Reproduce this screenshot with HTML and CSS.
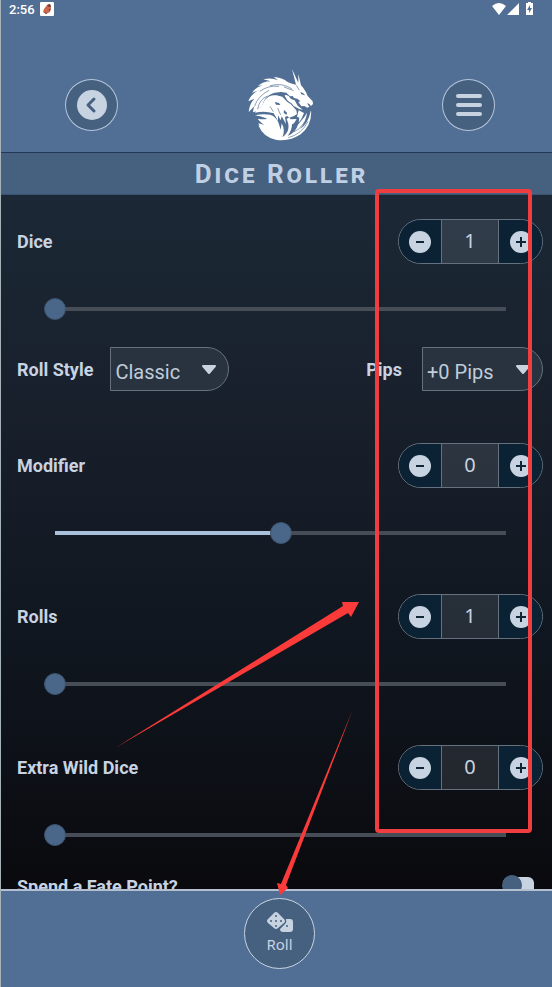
FILE: index.html
```html
<!DOCTYPE html>
<html lang="en">
<head>
    <meta charset="UTF-8">
    <meta name="viewport" content="width=device-width, initial-scale=1.0">
    <title>Dice Roller</title>
    <link rel="stylesheet" href="styles.css">
</head>
<body>
    <div class="app">
        <header class="header">
            <div class="status-bar">
                <span>2:56</span>
                <svg class="status-app" viewBox="0 0 14 14" aria-hidden="true">
                    <rect width="14" height="14" rx="1" fill="#fff"/>
                    <path d="M7 3 L10 2 L11 6 L10 10 L6 12 L3 10 L4 7 Z" fill="#c9674c"/>
                    <path d="M7 3 L10 2 L11 5 L9 5 Z M4 10 L7 11 L6 12 Z M9 7 L11 7 L9 9 Z" fill="#6d3a35"/>
                </svg>
                <svg class="status-icons" viewBox="0 0 42 14" aria-hidden="true">
                    <path d="M0 4 Q7 -2 14 4 L7 13 Z M15 13 L27 1 L27 13 Z" fill="#fff"/>
                    <path d="M36 0 h3 v1 h2 v12 h-7 v-12 h2 Z" fill="#fff"/>
                    <path d="M38 3 L35 8 h2 v3 L40 6 h-2 Z" fill="#516f94"/>
                </svg>
            </div>
            <nav class="nav">
                <button class="round-btn" aria-label="Back">
                    <svg width="30" height="30" viewBox="0 0 30 30">
                        <circle cx="15" cy="15" r="15" fill="#c8d3e2"/>
                        <path d="M17 9 L11 15 L17 21" fill="none" stroke="#46607f" stroke-width="3" stroke-linecap="round" stroke-linejoin="round"/>
                    </svg>
                </button>
                <svg class="logo" viewBox="33 27 198 216" role="img" aria-label="Dragon">
                    <!-- mane, horns and dragon head -->
                    <path fill="#fff" d="M51 157 Q52 145 56 138 L38 156 Q40 132 55 116 L37 124 Q44 103 65 92 L48 98 Q58 82 80 76 L66 78 Q80 64 104 64 L82 58 Q106 52 126 61 L113 51 Q138 52 156 67 L171 72 L180 74 L168 27 L184 62 L187 68 L187 42 L195 76 L202 84 L210 97 L215 108 L230 124 L231 132 L225 138 L219 131 L213 130 L220 140 L214 143 L205 138 L196 139 L187 126 L193 124 L184 116 L174 114 L170 108 L162 109 L151 98 L135 96 L116 98 Q94 104 84 122 L78 139 Q68 143 64 153 Z"/>
                    <!-- inner lion head -->
                    <path fill="#fff" d="M57 158 L64 148 L77 139 L86 121 Q99 103 122 106 L139 110 L154 126 L164 132 L181 151 L183 162 L174 168 L160 173 L154 168 L147 171 L150 192 L137 169 L134 181 L126 166 L126 182 L113 160 Q87 151 57 158 Z"/>
                    <path fill="#fff" d="M142 101 L158 108 L165 117 L176 121 L185 137 L200 149 L190 147 L173 138 L168 131 L155 122 Z"/>
                    <!-- tail coils -->
                    <path fill="#fff" d="M57 166 Q79 160 102 164 Q119 169 127 187 L134 209 L137 190 Q149 210 139 232 Q168 211 152 177 L160 172 Q178 195 155 228 Q179 217 186 194 L205 171 L213 158 Q211 184 192 207 Q216 193 225 151 Q229 194 194 223 Q159 246 119 239 Q82 232 67 196 Q87 207 96 202 Q74 189 65 176 Q83 180 94 176 Q75 169 57 166 Z"/>
                    <path fill="#fff" d="M160 178 L182 177 L174 190 L166 194 Z M188 151 L204 159 L196 177 L188 188 L190 173 L183 170 Z"/>
                    <!-- cuts -->
                    <path fill="#516f94" d="M116 126 L129 129 L133 135 L120 134 Z M136 98 L151 101 L146 108 Z M193 95 L204 101 L207 106 L196 103 Z M144 150 L153 158 L151 165 L143 158 Z"/>
                    <g fill="none" stroke="#516f94" stroke-width="2">
                        <path d="M56 138 Q65 109 99 91 M65 148 Q69 119 94 108 M71 94 Q98 75 129 79 M102 77 Q139 67 168 87 M144 81 L173 92 M181 76 L190 91"/>
                        <path d="M157 233 Q198 222 216 184 M173 216 Q202 203 215 166 M102 139 L112 155 M125 144 L134 165"/>
                    </g>
                    <path fill="#fff" d="M67 190 Q101 202 124 191 L132 221 L129 238 Q83 234 67 190 Z"/>
                </svg>
                <button class="round-btn" aria-label="Menu">
                    <svg width="28" height="24" viewBox="0 0 28 24">
                        <path d="M3 3 H25 M3 12 H25 M3 21 H25" stroke="#c8d3e2" stroke-width="4" stroke-linecap="round"/>
                    </svg>
                </button>
            </nav>
            <h1>Dice Roller</h1>
        </header>

        <main class="content">
            <section class="field dice">
                <div class="row">
                    <label for="dice">Dice</label>
                    <div class="stepper">
                        <button aria-label="Fewer dice"><svg viewBox="0 0 22 22"><use href="#minus"/></svg></button>
                        <output for="dice">1</output>
                        <button aria-label="More dice"><svg viewBox="0 0 22 22"><use href="#plus"/></svg></button>
                    </div>
                </div>
                <input type="range" id="dice" min="1" max="20" value="1">
            </section>

            <div class="row options">
                <label for="style">Roll Style</label>
                <span class="select">
                    <select id="style"><option>Classic</option></select>
                    <svg viewBox="0 0 16 10"><use href="#caret"/></svg>
                </span>
                <label class="pips-label" for="pips">Pips</label>
                <span class="select">
                    <select id="pips"><option>+0 Pips</option></select>
                    <svg viewBox="0 0 16 10"><use href="#caret"/></svg>
                </span>
            </div>

            <section class="field">
                <div class="row">
                    <label for="modifier">Modifier</label>
                    <div class="stepper">
                        <button aria-label="Lower modifier"><svg viewBox="0 0 22 22"><use href="#minus"/></svg></button>
                        <output for="modifier">0</output>
                        <button aria-label="Raise modifier"><svg viewBox="0 0 22 22"><use href="#plus"/></svg></button>
                    </div>
                </div>
                <input type="range" class="half" id="modifier" min="-20" max="20" value="0">
            </section>

            <section class="field">
                <div class="row">
                    <label for="rolls">Rolls</label>
                    <div class="stepper">
                        <button aria-label="Fewer rolls"><svg viewBox="0 0 22 22"><use href="#minus"/></svg></button>
                        <output for="rolls">1</output>
                        <button aria-label="More rolls"><svg viewBox="0 0 22 22"><use href="#plus"/></svg></button>
                    </div>
                </div>
                <input type="range" id="rolls" min="1" max="20" value="1">
            </section>

            <section class="field wild">
                <div class="row">
                    <label for="wild">Extra Wild Dice</label>
                    <div class="stepper">
                        <button aria-label="Fewer wild dice"><svg viewBox="0 0 22 22"><use href="#minus"/></svg></button>
                        <output for="wild">0</output>
                        <button aria-label="More wild dice"><svg viewBox="0 0 22 22"><use href="#plus"/></svg></button>
                    </div>
                </div>
                <input type="range" id="wild" min="0" max="20" value="0">
            </section>

            <div class="row fate">
                <label for="fate">Spend a Fate Point?</label>
                <input type="checkbox" class="toggle" id="fate">
            </div>
        </main>

        <footer class="footer">
            <button class="roll-btn">
                <svg width="26" height="22" viewBox="0 0 26 22">
                    <path fill="#c8d3e2" d="M7 1 Q9 -1 11 1 L17 7 Q19 9 17 11 L11 16 Q9 18 7 16 L1 11 Q-1 9 1 7 Z"/>
                    <path fill="#c8d3e2" d="M19 7 H23 Q26 7 26 10 V17 Q26 20 23 20 H16 Q13 20 13 17 L18 12 Q20 10 19 7 Z"/>
                    <g fill="#46607f">
                        <circle cx="9" cy="4" r="1"/><circle cx="4" cy="9" r="1"/><circle cx="9" cy="9" r="1"/>
                        <circle cx="14" cy="9" r="1"/><circle cx="9" cy="14" r="1"/><circle cx="20" cy="14" r="1"/>
                    </g>
                </svg>
                <span>Roll</span>
            </button>
        </footer>

        <!-- callouts drawn over the screen -->
        <svg class="callouts" viewBox="0 0 552 987" preserveAspectRatio="none" aria-hidden="true">
            <rect x="377" y="191" width="153" height="640" rx="2" fill="none" stroke="#f03e40" stroke-width="4"/>
            <path fill="#fb3b39" d="M115 748 L343 606 L342 602 L359 602 L351 617 L348 613 Z"/>
            <path fill="#fb3b39" d="M353 709 L286 885 L288 888 L280 895 L277 883 L281 884 Z"/>
        </svg>
    </div>

    <svg class="symbols" aria-hidden="true">
        <symbol id="minus" viewBox="0 0 22 22">
            <circle cx="11" cy="11" r="11" fill="#c8d3e2"/>
            <path d="M7 11 H15" stroke="#102536" stroke-width="2"/>
        </symbol>
        <symbol id="plus" viewBox="0 0 22 22">
            <circle cx="11" cy="11" r="11" fill="#c8d3e2"/>
            <path d="M6 11 H16 M11 6 V16" stroke="#102536" stroke-width="2"/>
        </symbol>
        <symbol id="caret" viewBox="0 0 16 10">
            <path d="M2 1 H14 L8 8 Z" fill="#c8d3e2" stroke="#c8d3e2" stroke-width="2" stroke-linejoin="round"/>
        </symbol>
    </svg>
</body>
</html>
```
FILE: styles.css
```css
* {
    margin: 0;
    padding: 0;
    box-sizing: border-box;
}

body {
    font-family: Roboto, sans-serif;
    color: #c8d3e2;
    background: #0a0b10;
}

button {
    font: inherit;
    color: inherit;
    cursor: pointer;
}

.app {
    position: relative;
    display: flex;
    flex-direction: column;
    height: 100vh;
    border-left: 1px solid #a5b2b8;
    overflow: hidden;
}

.header {
    flex: none;
    background: #516f94;
}

.status-bar {
    display: flex;
    align-items: center;
    height: 18px;
    padding: 0 18px 0 8px;
    color: #fff;
    font-size: 13px;
    font-weight: 500;
}

.status-app {
    width: 14px;
    height: 14px;
    margin-left: 5px;
}

.status-icons {
    width: 42px;
    height: 14px;
    margin-left: auto;
}

.nav {
    display: flex;
    align-items: center;
    justify-content: space-between;
    height: 134px;
    padding: 40px 57px 0 64px;
}

.round-btn {
    display: flex;
    align-items: center;
    justify-content: center;
    width: 53px;
    height: 52px;
    border: 1px solid #b4c6dc;
    border-radius: 50%;
    background: #46607f;
}

.logo {
    width: 66px;
    height: 72px;
}

h1 {
    height: 43px;
    border-top: 1px solid #22375a;
    border-bottom: 1px solid #3b5370;
    background: #46607f;
    color: #c0d0e4;
    font-size: 26px;
    line-height: 43px;
    font-weight: 700;
    font-variant: small-caps;
    letter-spacing: 3px;
    text-align: center;
    padding-left: 10px;
}

.content {
    flex: 1;
    min-height: 0;
    overflow: hidden;
    padding: 24px 9px 0 16px;
    background: linear-gradient(#1c2836, #18202c 30%, #10161f 65%, #0a0a0e);
}

.row {
    display: flex;
    align-items: center;
    justify-content: space-between;
}

label {
    font-size: 18px;
    font-weight: 700;
}

.field {
    margin-bottom: 49px;
}

.field.dice,
.field.wild {
    margin-bottom: 26px;
}

.stepper {
    display: flex;
    width: 145px;
    height: 45px;
    border: 1px solid #65717e;
    border-radius: 23px;
    overflow: hidden;
}

.stepper button {
    display: flex;
    align-items: center;
    flex: 1;
    border: none;
    background: #0a2233;
}

.stepper button:first-child {
    justify-content: flex-end;
    padding-right: 10px;
}

.stepper button:last-child {
    padding-left: 11px;
}

.stepper svg {
    width: 22px;
    height: 22px;
}

.stepper output {
    width: 58px;
    border-left: 1px solid #65717e;
    border-right: 1px solid #65717e;
    background: rgba(200, 211, 226, 0.12);
    font-family: "Noto Sans", sans-serif;
    font-size: 20px;
    line-height: 42px;
    text-align: center;
}

input[type="range"] {
    appearance: none;
    display: block;
    width: calc(100% - 53px);
    height: 24px;
    margin: 33px 0 0 27px;
    background: none;
}

input[type="range"]::-webkit-slider-runnable-track {
    height: 4px;
    background: linear-gradient(#474d57, #474d57) center / calc(100% - 22px) 4px no-repeat;
}

input[type="range"].half::-webkit-slider-runnable-track {
    background-image: linear-gradient(90deg, #a9c0da 50%, #474d57 50%);
}

input[type="range"]::-webkit-slider-thumb {
    appearance: none;
    width: 22px;
    height: 22px;
    margin-top: -9px;
    border: 1px solid #3c536e;
    border-radius: 50%;
    background: #4a6688;
}

.options {
    height: 44px;
    margin-bottom: 52px;
}

.pips-label {
    margin-left: auto;
}

.select {
    position: relative;
    width: 119px;
    height: 44px;
    margin-left: 17px;
}

.pips-label + .select {
    width: 121px;
    margin-left: 20px;
}

.select select {
    appearance: none;
    width: 100%;
    height: 100%;
    padding: 5px 0 0 4px;
    border: 1px solid #65717e;
    border-radius: 0 22px 22px 0;
    background: #29333f;
    color: #c0ccda;
    font-family: Roboto, sans-serif;
    font-size: 20px;
}

.select svg {
    position: absolute;
    top: 18px;
    right: 12px;
    width: 16px;
    height: 10px;
    pointer-events: none;
}

.fate {
    height: 26px;
    padding-right: 9px;
}

.toggle {
    appearance: none;
    position: relative;
    width: 31px;
    height: 18px;
    border-radius: 6px;
    background: #c8d3e2;
}

.toggle::before {
    content: "";
    position: absolute;
    top: -2px;
    left: -1px;
    width: 20px;
    height: 20px;
    border-radius: 50%;
    background: #46607f;
}

.footer {
    display: flex;
    justify-content: center;
    flex: none;
    height: 98px;
    padding: 7px 0 0 6px;
    border-top: 2px solid #b4c0d0;
    background: #516f94;
}

.roll-btn {
    display: flex;
    flex-direction: column;
    align-items: center;
    width: 71px;
    height: 71px;
    padding-top: 13px;
    border: 1px solid #c8d3e2;
    border-radius: 50%;
    background: #46607f;
    font-family: "Noto Sans", sans-serif;
    font-size: 15px;
    line-height: 20px;
}

.callouts {
    position: absolute;
    top: 0;
    left: -1px;
    width: calc(100% + 1px);
    height: 100%;
    pointer-events: none;
}

.symbols {
    display: none;
}
```
